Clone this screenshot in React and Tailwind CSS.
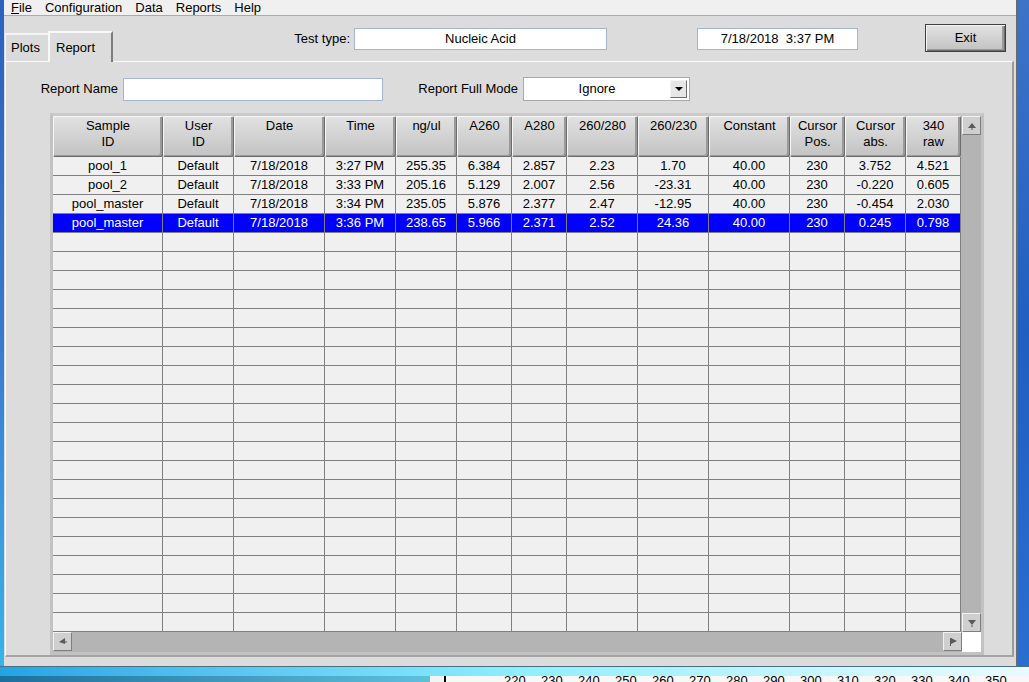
import React from 'react';

const cols = [
    { label: ['Sample', 'ID'], w: 'w-[110px]' },
    { label: ['User', 'ID'], w: 'w-[71px]' },
    { label: ['Date'], w: 'w-[91px]' },
    { label: ['Time'], w: 'w-[71px]' },
    { label: ['ng/ul'], w: 'w-[61px]' },
    { label: ['A260'], w: 'w-[55px]' },
    { label: ['A280'], w: 'w-[55px]' },
    { label: ['260/280'], w: 'w-[71px]' },
    { label: ['260/230'], w: 'w-[71px]' },
    { label: ['Constant'], w: 'w-[81px]' },
    { label: ['Cursor', 'Pos.'], w: 'w-[55px]' },
    { label: ['Cursor', 'abs.'], w: 'w-[61px]' },
    { label: ['340', 'raw'], w: 'w-[55px]' },
];

const rows = [
    ['pool_1', 'Default', '7/18/2018', '3:27 PM', '255.35', '6.384', '2.857', '2.23', '1.70', '40.00', '230', '3.752', '4.521'],
    ['pool_2', 'Default', '7/18/2018', '3:33 PM', '205.16', '5.129', '2.007', '2.56', '-23.31', '40.00', '230', '-0.220', '0.605'],
    ['pool_master', 'Default', '7/18/2018', '3:34 PM', '235.05', '5.876', '2.377', '2.47', '-12.95', '40.00', '230', '-0.454', '2.030'],
    ['pool_master', 'Default', '7/18/2018', '3:36 PM', '238.65', '5.966', '2.371', '2.52', '24.36', '40.00', '230', '0.245', '0.798'],
];

const SELECTED = 3;
const TOTAL_ROWS = 25;
const axis = ['220', '230', '240', '250', '260', '270', '280', '290', '300', '310', '320', '330', '340', '350'];

const bevel = 'bg-gradient-to-b from-[#e2e2e2] to-[#c2c2c2] shadow-[inset_1px_1px_0_#f6f6f6,inset_-1px_-1px_0_#6c6c6c,inset_-3px_-2px_0_#9a9a9a]';

// little scroll arrows, triangle with a stem
const Arrow = ({ dir }) => {
    const shapes = {
        up: <><polygon points="1,7 9,7 5,2" /><rect x="4.5" y="7" width="1" height="2" /></>,
        down: <><polygon points="1,2 9,2 5,7" /><rect x="4.5" y="7" width="1" height="2" /></>,
        left: <><polygon points="1,5 7,1 7,7" /><rect x="7" y="4.5" width="2" height="1" /></>,
        right: <><polygon points="9,4 3,1 3,7" /><rect x="2" y="1" width="1" height="8" /></>,
    };
    return (
        <svg width="10" height="10" viewBox="0 0 10 10" fill="#5a5a5a">
            {shapes[dir]}
        </svg>
    );
};

const ScrollButton = ({ dir }) => (
    <div className="w-[19px] h-[19px] flex items-center justify-center bg-[#cfcfcf] border-t border-l border-[#f2f2f2] border-r border-b border-r-[#7e7e7e] border-b-[#7e7e7e]">
        <Arrow dir={dir} />
    </div>
);

const App = () => {
    const emptyRows = TOTAL_ROWS - rows.length;

    return (
        <div className="w-[1029px] h-[682px] overflow-hidden flex flex-col bg-[#dcdcdc] font-['Liberation_Sans',Arial,sans-serif] text-[13px] text-black">
            <div className="flex h-[666px]">
                {/* window frame left */}
                <div className="w-[4px] bg-gradient-to-b from-[#2a62bd] via-[#3a78cf] to-[#36b4ea]" />

                <div className="w-[1012px] flex flex-col">
                    {/* Menu bar */}
                    <div className="h-[16px] bg-[#f0f0f0] border-b border-[#ababab] flex items-center gap-[13px] pl-[7px] leading-[14px]">
                        <span><span className="underline">F</span>ile</span>
                        <span>Configuration</span>
                        <span>Data</span>
                        <span>Reports</span>
                        <span>Help</span>
                    </div>

                    {/* Tabs and top controls */}
                    <div className="h-[45px] flex items-start">
                        <div className="self-end flex items-end ml-[1px]">
                            <div className="w-[43px] h-[28px] border-t-2 border-l border-[#f4f4f4] bg-[#dadada] flex items-center pl-[5px]">
                                Plots
                            </div>
                            <div className="relative z-10 -mb-[1px] w-[65px] h-[31px] bg-[#dcdcdc] border-t-2 border-l-2 border-[#f8f8f8] border-r-2 border-r-[#7c7c7c] flex items-center pl-[6px]">
                                Report
                            </div>
                        </div>
                        <div className="ml-[179px] mt-[12px] flex items-center">
                            <span className="w-[58px] mr-[4px] text-right whitespace-nowrap">Test type:</span>
                            <div className="w-[253px] h-[22px] bg-white border border-[#a7b4cf] flex items-center justify-center">
                                Nucleic Acid
                            </div>
                        </div>
                        <div className="ml-[90px] mt-[12px] w-[161px] h-[22px] bg-white border border-[#a7b4cf] flex items-center justify-center">
                            7/18/2018&nbsp;&nbsp;3:37 PM
                        </div>
                        <div className={`ml-[67px] mt-[8px] w-[81px] h-[28px] border border-[#3e3e3e] flex items-center justify-center ${bevel}`}>
                            Exit
                        </div>
                    </div>

                    {/* Tab panel */}
                    <div className="ml-[1px] w-[1009px] h-[596px] border-t border-l border-[#fafafa] border-r-2 border-b-2 border-r-[#9c9c9c] border-b-[#a4a4a4] flex flex-col">
                        <div className="mt-[15px] flex items-center">
                            <span className="ml-[31px] w-[81px] mr-[5px] text-right whitespace-nowrap">Report Name</span>
                            <div className="w-[260px] h-[23px] bg-white border border-[#a7b4cf]" />
                            <span className="ml-[32px] w-[103px] mr-[5px] text-right whitespace-nowrap">Report Full Mode</span>
                            <div className="w-[167px] h-[24px] bg-white border border-[#a9a9a9] flex items-center">
                                <span className="flex-1 text-center">Ignore</span>
                                <div className="w-[17px] h-[18px] mr-[2px] bg-[#e6e6e6] border border-[#f4f4f4] border-r-[#6e6e6e] border-b-[#6e6e6e] flex items-center justify-center">
                                    <svg width="8" height="5" viewBox="0 0 8 5"><polygon points="0,0 8,0 4,4" fill="#000" /></svg>
                                </div>
                            </div>
                        </div>

                        {/* Table frame */}
                        <div className="mt-[12px] ml-[44px] w-[934px] border-[3px] border-[#c2c2c2] border-t-[#cacaca] flex flex-col">
                            <div className="flex">
                                <div className="w-[908px] flex flex-col">
                                    <div className="flex">
                                        {cols.map((c, i) => (
                                            <div key={i} className={`${c.w} h-[41px] rounded-[2px] pt-[2px] leading-[16px] text-center ${bevel}`}>
                                                {c.label.map((l, j) => <div key={j}>{l}</div>)}
                                            </div>
                                        ))}
                                    </div>
                                    {rows.map((r, ri) => (
                                        <div key={ri} className={`flex ${ri === SELECTED ? 'bg-[#0000ff] text-white' : 'bg-[#f0f0f0]'}`}>
                                            {r.map((v, ci) => (
                                                <div key={ci} className={`${cols[ci].w} h-[19px] border-r border-b border-[#7f7f7f] flex items-center justify-center leading-[15px] pb-[1px]`}>
                                                    {v}
                                                </div>
                                            ))}
                                        </div>
                                    ))}
                                    {Array.from({ length: emptyRows }).map((_, ri) => (
                                        <div key={`e${ri}`} className="flex bg-[#f0f0f0]">
                                            {cols.map((c, ci) => (
                                                <div key={ci} className={`${c.w} h-[19px] border-r border-b border-[#7f7f7f]`} />
                                            ))}
                                        </div>
                                    ))}
                                </div>

                                {/* vertical scrollbar */}
                                <div className="w-[20px] flex flex-col items-end bg-[#b4b4b4]">
                                    <ScrollButton dir="up" />
                                    <div className="flex-1" />
                                    <ScrollButton dir="down" />
                                </div>
                            </div>

                            {/* horizontal scrollbar */}
                            <div className="flex">
                                <div className="w-[909px] h-[20px] bg-[#b4b4b4] flex items-start justify-between">
                                    <ScrollButton dir="left" />
                                    <ScrollButton dir="right" />
                                </div>
                                <div className="w-[19px] h-[20px] bg-white" />
                            </div>
                        </div>
                    </div>
                </div>

                {/* window frame right and desktop */}
                <div className="w-[2px] bg-[#6a6a6a]" />
                <div className="flex-1 bg-gradient-to-b from-[#3d74c8] via-[#1f5fc0] to-[#2a6fd0]" />
            </div>

            {/* window bottom border and the window behind */}
            <div className="h-[16px] flex flex-col">
                <div className="h-[10px] border-t border-[#4a6f80] bg-gradient-to-r from-[#22a4e4] via-[#8cefff] to-[#e8fbff]" />
                <div className="h-[6px] flex overflow-hidden">
                    <div className="w-[430px] bg-gradient-to-r from-[#1c6f9c] to-[#5fc0dc]" />
                    <div className="w-[2px] bg-[#f4f4f4]" />
                    <div className="w-[14px] bg-[#f4f4f4] flex">
                        <div className="ml-[12px] w-[2px] bg-black" />
                    </div>
                    <div className="flex-1 bg-[#f8f8f8] flex items-start pl-[58px]">
                        {axis.map(a => (
                            <span key={a} className="w-[37px] -mt-[2px] leading-[14px]">{a}</span>
                        ))}
                    </div>
                </div>
            </div>
        </div>
    );
};

export default App;
